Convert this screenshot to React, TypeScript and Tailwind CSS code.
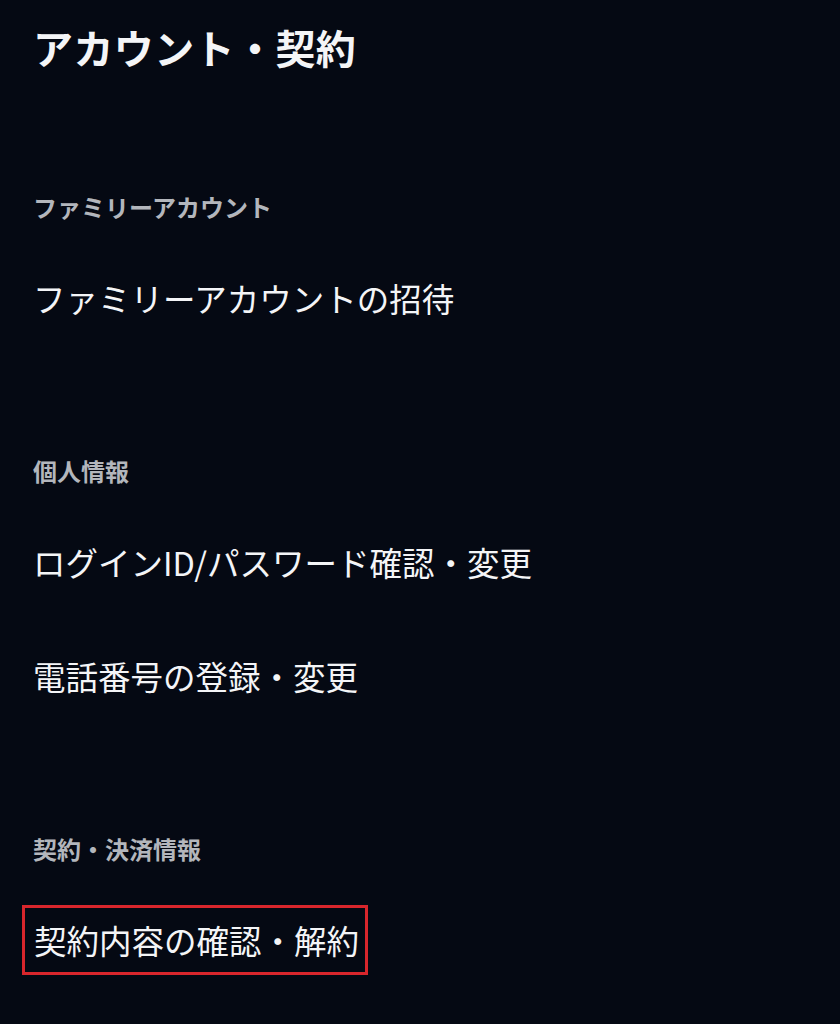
import React from 'react'

type Section = {
  title: string
  items: { label: string; highlight?: boolean }[]
}

const sections: Section[] = [
  { title: 'ファミリーアカウント', items: [{ label: 'ファミリーアカウントの招待' }] },
  {
    title: '個人情報',
    items: [{ label: 'ログインID/パスワード確認・変更' }, { label: '電話番号の登録・変更' }],
  },
  { title: '契約・決済情報', items: [{ label: '契約内容の確認・解約', highlight: true }] },
]

export default function App() {
  return (
    <div
      className="min-h-[1024px] w-[840px] bg-[#050913] pl-[33px] text-[#f4f5f7]"
      style={{ fontFamily: '"Noto Sans CJK JP", "Noto Sans", sans-serif' }}
    >
      {/* Page title */}
      <div className="flex h-[94px] items-center">
        <h1 className="text-[40px] font-bold leading-none tracking-[0.01em]">アカウント・契約</h1>
      </div>

      {sections.map((s, i) => (
        <section key={s.title} className={i === 0 ? 'mt-[89px]' : 'mt-[92px]'}>
          <div className="flex h-[48px] items-center">
            <h2 className="text-[24px] font-bold leading-none text-[#b3b6bc]">{s.title}</h2>
          </div>
          <ul className="mt-[10px]">
            {s.items.map((item) => (
              <li key={item.label} className="flex h-[114px] items-center">
                {item.highlight ? (
                  <span className="-ml-[11px] flex h-[70px] items-center border-[3px] border-[#d8262c] pl-[9px] pr-[6px] text-[32.5px] leading-none">
                    {item.label}
                  </span>
                ) : (
                  <span className="text-[32.5px] leading-none">{item.label}</span>
                )}
              </li>
            ))}
          </ul>
        </section>
      ))}
    </div>
  )
}
